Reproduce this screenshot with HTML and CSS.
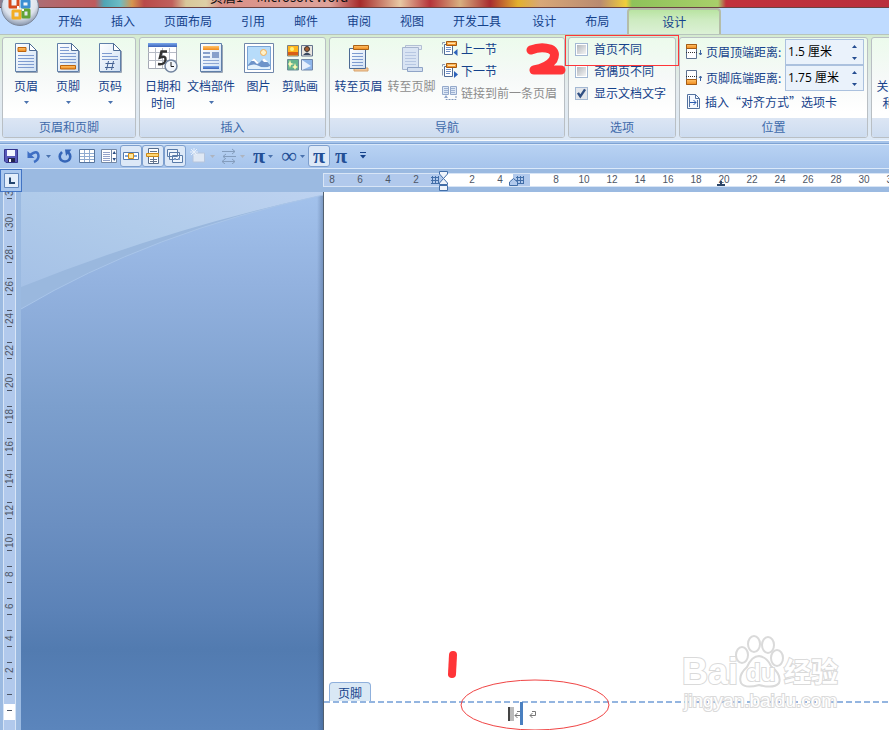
FILE: index.html
```html
<!DOCTYPE html>
<html lang="zh-CN">
<head>
<meta charset="utf-8">
<title>页眉1 - Microsoft Word</title>
<link rel="stylesheet" href="styles.css">
</head>
<body>
<svg class="defs" aria-hidden="true">
  <defs>
    <linearGradient id="paper" x1="0" y1="0" x2="1" y2="1"><stop offset="0" stop-color="#fff"/><stop offset="1" stop-color="#cfe0f4"/></linearGradient>
    <linearGradient id="orange" x1="0" y1="0" x2="0" y2="1"><stop offset="0" stop-color="#ffc36a"/><stop offset="1" stop-color="#f08a1c"/></linearGradient>
    <linearGradient id="blue" x1="0" y1="0" x2="0" y2="1"><stop offset="0" stop-color="#7aa7ea"/><stop offset="1" stop-color="#3a62b8"/></linearGradient>
    <symbol id="sheet" viewBox="0 0 24 30"><path d="M1.500 .5H15.500L22.500 7.500V28.500H1.500Z" fill="url(#paper)" stroke="#5f7fa8"/><path d="M2 29.500H23.500V8" fill="none" stroke="#9aa5b5"/><path d="M15.500 .5V7.500H22.500Z" fill="#fff" stroke="#4c6a94"/></symbol>
    <symbol id="down" viewBox="0 0 5 3"><path d="M0 0H5L2.500 3Z" fill="currentColor"/></symbol>
    <symbol id="up" viewBox="0 0 5 3"><path d="M0 3H5L2.500 0Z" fill="currentColor"/></symbol>
    <symbol id="section" viewBox="0 0 16 16"><path d="M.5 3.500V1.500H3M.5 6V12.500" fill="none" stroke="#8c9bb3"/><path d="M2.500 3.500H10.500V13.500H2.500Z" fill="#fff" stroke="#4e6b96"/><path d="M4 6.500H9M4 8.500H9M4 10.500H8" stroke="#6f8fc5"/><path d="M4.500 .5H14.500V4.500H4.500Z" fill="url(#orange)" stroke="#a55a10"/><path d="M6 2.500H13" stroke="#ffe3b0"/></symbol>
    <symbol id="grid" viewBox="0 0 8 8"><path d="M0 1.500H8M0 4.500H8M0 7.500H8M1.500 0V8M4.500 0V8M7.500 0V8" stroke="#426ea8" fill="none"/></symbol>
    <symbol id="return" viewBox="0 0 8 8"><path d="M3 1.500H6.500V5.500H1M3.500 3L1 5.500L3.500 8" fill="none" stroke="#777"/></symbol>
  </defs>
</svg>

<header class="titlebar">
  <span class="title">页眉1&nbsp; - Microsoft Word</span>
</header>
<button class="office" type="button" aria-label="Office 按钮">
  <svg width="38" height="38" viewBox="0 0 38 38"><defs><radialGradient id="orb" cx=".5" cy=".35" r=".65"><stop offset="0" stop-color="#fff"/><stop offset=".7" stop-color="#dce2ec"/><stop offset="1" stop-color="#8795ac"/></radialGradient></defs>
  <circle cx="19" cy="19" r="18.500" fill="url(#orb)" stroke="#7c8698"/>
  <g fill="none" stroke-width="3" stroke-linejoin="round"><path d="M9 11V19H17V12" stroke="#d64a1c"/><path d="M21 13H28V19H21Z" stroke="#3d8fd2"/><path d="M12 23H19V30H12Z" stroke="#f3ad22"/><path d="M22 22H28V29H22Z" stroke="#62a336"/></g>
  <path d="M16 18H18V21H16ZM21 21H23V23H21Z" fill="#fff"/></svg>
</button>

<nav class="tabs" aria-label="功能区选项卡">
  <button type="button">开始</button><button type="button">插入</button><button type="button">页面布局</button><button type="button">引用</button><button type="button">邮件</button><button type="button">审阅</button><button type="button">视图</button><button type="button">开发工具</button><button type="button" class="context">设计</button><button type="button">布局</button><button type="button" class="active">设计</button>
</nav>

<main class="ribbon">
  <section class="group">
    <div class="tools">
      <button class="big" type="button"><svg width="24" height="30"><use href="#sheet"/><path d="M4 4.500H12V8.500H4Z" fill="url(#orange)" stroke="#bd640e"/><path d="M4 12.500H20M4 15.500H20M4 18.500H20M4 21.500H20M4 24.500H20" stroke="#7e9bd0"/></svg><span>页眉</span><svg class="arrow"><use href="#down"/></svg></button>
      <button class="big" type="button"><svg width="24" height="30"><use href="#sheet"/><path d="M4 4.500H13M4 7.500H13M4 10.500H20M4 13.500H20M4 16.500H20M4 19.500H20" stroke="#7e9bd0"/><path d="M4.500 22.500H19.500V26H4.500Z" fill="url(#orange)" stroke="#bd640e"/></svg><span>页脚</span><svg class="arrow"><use href="#down"/></svg></button>
      <button class="big" type="button"><svg width="24" height="30"><use href="#sheet"/><path d="M4 10.500H14M4 13.500H20M4 16.500H20" stroke="#7e9bd0"/><path d="M10.500 18L8.500 27M15.500 18L13.500 27M7.500 20.500H16.500M7 24.500H16" stroke="#466394" fill="none"/></svg><span>页码</span><svg class="arrow"><use href="#down"/></svg></button>
    </div>
    <h2>页眉和页脚</h2>
  </section>

  <section class="group">
    <div class="tools">
      <button class="big" type="button"><svg width="30" height="30"><path d="M.5 .5H28.500V25.500H.5Z" fill="#fff" stroke="#a4a9b4"/><path d="M0 9.500H28M0 17.500H28M7.500 5V25M14.500 5V25M21.500 5V25" stroke="#b7bcc6"/><path d="M0 0H29V4H0Z" fill="url(#blue)"/><path d="M19 8.500H13.500L12 14.500Q18 12 17.500 17T10 21" fill="none" stroke="#333" stroke-width="2.500"/><circle cx="23" cy="23" r="6" fill="#f3f7fc" stroke="#71839e" stroke-width="1.500"/><path d="M23 19V23.500H26" fill="none" stroke="#222"/></svg><span>日期和<br>时间</span></button>
      <button class="big wide" type="button"><svg width="24" height="30"><path d="M1.500 .5H22.500V28.500H1.500Z" fill="url(#paper)" stroke="#5f7fa8"/><path d="M2 29.500H23.500V2" fill="none" stroke="#9aa5b5"/><path d="M4 3H20V7H4Z" fill="url(#orange)"/><path d="M4 9H11V11H4ZM4 13H11V15H4Z" fill="#88a0cb"/><path d="M13 9H20V15H13Z" fill="#88a0cb"/><path d="M4 17.500H20M4 20.500H20" stroke="#8ca6d3"/><path d="M4 23H20V26H4Z" fill="url(#blue)"/></svg><span>文档部件</span><svg class="arrow"><use href="#down"/></svg></button>
      <button class="big photo" type="button"><svg width="30" height="30"><path d="M.5 .5H29.500V29.500H.5Z" fill="#fff" stroke="#7087aa"/><path d="M3.500 3.500H26.500V26.500H3.500Z" fill="#b7dcfa" stroke="#7ba5d4"/><circle cx="19.500" cy="9.500" r="3" fill="#fff1c8" stroke="#f2ad55"/><path d="M4 22L10 15L15 20L20 15L26 22V24H4Z" fill="#6e94c9"/><path d="M7 18L10 15L15 20L13 21L10 18ZM18 17L20 15L24 19L20 19Z" fill="#fff"/><path d="M4 23Q10 20 15 23T26 23V26H4Z" fill="#e4f2fc"/></svg><span>图片</span></button>
      <button class="big" type="button"><svg width="30" height="30"><path d="M2.500 2.500H13.500V13H2.500Z" fill="#ffb51d" stroke="#7b7f80"/><path d="M3 9H13V12H3Z" fill="#d95d16"/><circle cx="7" cy="6" r="2" fill="#fff27c"/><path d="M16.500 2.500H27.500V13H16.500Z" fill="#e8e5df" stroke="#64748d"/><circle cx="22" cy="6" r="2.500" fill="#a65d2f" stroke="#333"/><path d="M18 12Q22 7 26 12Z" fill="#39485f"/><path d="M2.500 16.500H13.500V27H2.500Z" fill="#65b58d" stroke="#6b8b97"/><path d="M5 17L6 20L9 21L6 22L5 25L4 22L3 21L4 20ZM10 20L11 23L13 24L11 25L10 27L9 25L7 24L9 23Z" fill="#fff8b2"/><path d="M16.500 16.500H27.500V27H16.500Z" fill="#8eb6ea" stroke="#7186a8"/><path d="M17 17L26 23L17 27Z" fill="#e6f0fd"/></svg><span>剪贴画</span></button>
    </div>
    <h2>插入</h2>
  </section>

  <section class="group">
    <div class="tools">
      <button class="big goto" type="button"><svg width="24" height="30"><path d="M7 25H21V28H7Z" fill="#f5c99a" stroke="#d7a26c"/><path d="M2.500 5.500H18.500V25.500H2.500Z" fill="url(#paper)" stroke="#4d6a94"/><path d="M5 10.500H16M5 13.500H16M5 16.500H16M5 19.500H16M5 22.500H16" stroke="#7e9bd0"/><path d="M6.500 2.500H21.500V6.500H6.500Z" fill="url(#orange)" stroke="#a96118"/></svg><span>转至页眉</span></button>
      <button class="big goto" type="button" disabled><svg width="24" height="30"><path d="M5.500 2.500H21.500V6.500H5.500Z" fill="#e4ebf5" stroke="#b2bfd3"/><path d="M2.500 4.500H18.500V26.500H2.500Z" fill="#d9e4f3" stroke="#a6b5ce"/><path d="M5 9.500H16M5 12.500H16M5 15.500H16M5 18.500H16M5 21.500H16" stroke="#b7c7e2"/><path d="M7.500 24.500H22.500V28.500H7.500Z" fill="#d3dff0" stroke="#8fa4c7"/></svg><span>转至页脚</span></button>
      <div class="stack">
        <button class="small" type="button"><svg width="16" height="16"><use href="#section"/><path d="M15.500 8V15L11.500 11.500Z" fill="#2d62ba"/></svg>上一节</button>
        <button class="small" type="button"><svg width="16" height="16"><use href="#section"/><path d="M12 8V15L16 11.500Z" fill="#2d62ba"/></svg>下一节</button>
        <button class="small" type="button" disabled><svg width="16" height="16"><path d="M.5 1.500H6.500V9.500H.5ZM8.500 1.500H14.500V9.500H8.500Z" fill="#dce7f5" stroke="#94a9ca"/><path d="M2 3.500H6M2 5.500H6M9 3.500H13M9 5.500H13M2 7.500H6M9 7.500H13" stroke="#9eb2d2"/><path d="M4 11V14.500H14V11" fill="none" stroke="#7f96bb" stroke-dasharray="2 1"/><path d="M2 13L4 10L6 13Z" fill="#92a8ce"/></svg>链接到前一条页眉</button>
      </div>
    </div>
    <h2>导航</h2>
    <svg class="mark-two" width="40" height="34" viewBox="0 0 40 34" aria-hidden="true"><path d="M5 7Q15 3 24 6Q31 9 27 17Q22 24 8 27L35 27" fill="none" stroke="#ff3538" stroke-width="9" stroke-linecap="round" stroke-linejoin="round"/></svg>
  </section>

  <section class="group">
    <div class="tools options">
      <label><input type="checkbox">首页不同</label>
      <label><input type="checkbox">奇偶页不同</label>
      <label><input type="checkbox" checked>显示文档文字</label>
    </div>
    <h2>选项</h2>
    <div class="mark-box"></div>
  </section>

  <section class="group">
    <div class="tools position">
      <div class="measure">
        <svg width="16" height="16"><path d="M.5 .5H10.500V14.500H.5Z" fill="#fff" stroke="#5d7190"/><path d="M.5 .5H10.500V4.500H.5Z" fill="url(#orange)" stroke="#a65c13"/><path d="M0 8.500H11" stroke="#333" stroke-dasharray="1 1"/><path d="M14.500 6V11M13 9L14.500 11L16 9" stroke="#3e64a0" fill="none"/></svg>
        <label for="top">页眉顶端距离:</label>
        <span class="spin"><input id="top" type="text" value="1.5 厘米"><span class="steps"><button type="button" aria-label="增加页眉距离"><svg><use href="#up"/></svg></button><button type="button" aria-label="减少页眉距离"><svg><use href="#down"/></svg></button></span></span>
      </div>
      <div class="measure">
        <svg width="16" height="16"><path d="M.5 .5H10.500V14.500H.5Z" fill="#fff" stroke="#5d7190"/><path d="M.5 9.500H10.500V14.500H.5Z" fill="url(#orange)" stroke="#a65c13"/><path d="M0 6.500H11" stroke="#333" stroke-dasharray="1 1"/><path d="M14.500 11V6M13 8L14.500 6L16 8" stroke="#3e64a0" fill="none"/></svg>
        <label for="bottom">页脚底端距离:</label>
        <span class="spin"><input id="bottom" type="text" value="1.75 厘米"><span class="steps"><button type="button" aria-label="增加页脚距离"><svg><use href="#up"/></svg></button><button type="button" aria-label="减少页脚距离"><svg><use href="#down"/></svg></button></span></span>
      </div>
      <button class="small align" type="button"><svg width="16" height="16"><path d="M1.500 .5H9.500L13.500 4.500V14.500H1.500Z" fill="#f5f9ff" stroke="#5372a0"/><path d="M9.500 .5V4.500H13.500M3.500 2V13M11.500 6V13" fill="none" stroke="#5372a0"/><path d="M4 8.500H10M7.500 6L10 8.500L7.500 11" fill="none" stroke="#2859ae"/></svg>插入“对齐方式”选项卡</button>
    </div>
    <h2>位置</h2>
  </section>

  <section class="group">
    <div class="tools">
      <button class="big goto" type="button"><svg width="20" height="30"><path d="M4 8L16 22M16 8L4 22" stroke="#d33a2c" stroke-width="4"/></svg><span>关闭页眉<br>和页脚</span></button>
    </div>
    <h2>关闭</h2>
  </section>
</main>

<div class="quick" role="toolbar" aria-label="快速访问工具栏">
  <button type="button" aria-label="保存"><svg width="16" height="16"><path d="M1.500 1.500H14.500V14.500H3L1.500 13Z" fill="#5759b8" stroke="#35358c"/><path d="M4 2H12V8H4Z" fill="#f4f7ff"/><path d="M5 10H12V14H5Z" fill="#25264d"/><path d="M6 11H8V14H6Z" fill="#fff"/></svg></button>
  <button class="split" type="button" aria-label="撤消"><svg width="16" height="16"><path d="M4 7Q12 1 12.500 8Q12.500 12 8 14" fill="none" stroke="#3f6fc4" stroke-width="2.500"/><path d="M1.500 3V10H8.500Z" fill="#3f6fc4"/></svg><svg class="arrow"><use href="#down"/></svg></button>
  <button type="button" aria-label="重复"><svg width="16" height="16"><path d="M5 4Q1 8 4 12Q8 15 12 12Q15 8 11 4" fill="none" stroke="#3565b7" stroke-width="2.500"/><path d="M8 1.500H14.500L9 8Z" fill="#3565b7"/></svg></button>
  <button type="button" aria-label="表格"><svg width="16" height="16"><path d="M.5 1.500H15.500V14.500H.5Z" fill="#fff" stroke="#56749d"/><path d="M1 5.500H15M1 8.500H15M1 11.500H15M5.500 2V14M10.500 2V14" stroke="#8faad0"/></svg></button>
  <button type="button" aria-label="列表框"><svg width="16" height="16"><path d="M.5 1.500H15.500V14.500H.5Z" fill="#fff" stroke="#7488a5"/><path d="M10.500 2V14" stroke="#7488a5"/><path d="M2 4.500H9M2 6.500H9M2 8.500H9M2 10.500H9M2 12.500H9" stroke="#93a2c9"/><path d="M11.500 6H15L13.200 3ZM11.500 10H15L13.200 13Z" fill="#294d85"/></svg></button>
  <button class="on" type="button" aria-label="居中控件"><svg width="16" height="16"><path d="M.5 4.500H15.500V11.500H.5Z" fill="#fff" stroke="#577cac"/><path d="M2 7H5V9H2ZM11 7H14V9H11Z" fill="#7da5d8"/><path d="M5.500 5.500H10.500V10.500H5.500Z" fill="#ffe79a" stroke="#d18c17"/></svg></button>
  <button class="on" type="button" aria-label="版式"><svg width="16" height="16"><path d="M3.500 .5H13.500V15.500H3.500Z" fill="#fff" stroke="#566d8d"/><path d="M5 3.500H12M5 11.500H12M5 13.500H12M8.500 9V15" stroke="#65758e"/><path d="M1.500 5.500H13.500V8.500H1.500Z" fill="#ffd774" stroke="#ce8917"/></svg></button>
  <button class="on" type="button" aria-label="窗口"><svg width="16" height="16"><path d="M.5 1.500H10.500V8.500H.5ZM2.500 4.500H12.500V11.500H2.500ZM5.500 7.500H15.500V14.500H5.500Z" fill="#eef5fd" stroke="#587aa8"/><path d="M7 10H9V12H7ZM11 10H13V12H11Z" fill="#7b9bc8"/></svg></button>
  <button class="split" type="button" aria-label="新建" disabled><svg width="16" height="16"><path d="M5 5H14.500V14H3V8Z" fill="#dfe8f4" stroke="#b6c5dc"/><path d="M4 0V8M0 4H8M1 1L7 7M7 1L1 7" stroke="#e8f0fa"/></svg><svg class="arrow"><use href="#down"/></svg></button>
  <button class="split tight" type="button" aria-label="箭头" disabled><svg width="16" height="16"><path d="M1 3.500H14M11 1L14 3.500L11 6M15 8.500H2M5 6L2 8.500L5 11M1 13.500H14M11 11L14 13.500L11 16M4 11L1 13.500L4 16" fill="none" stroke="#849dbd"/></svg><svg class="arrow"><use href="#down"/></svg></button>
  <button class="split tight" type="button"><span class="math">π</span><svg class="arrow"><use href="#down"/></svg></button>
  <button class="split tight" type="button"><span class="math thin">∞</span><svg class="arrow"><use href="#down"/></svg></button>
  <button class="on" type="button"><span class="math">π</span></button>
  <button type="button"><span class="math">π</span></button>
  <button type="button" aria-label="自定义快速访问工具栏"><svg width="8" height="8"><path d="M1 .5H7" stroke="#15428b"/><path d="M1 3H7L4 6.500Z" fill="#15428b"/></svg></button>
</div>

<div class="rulerbar">
  <button class="corner" type="button" aria-label="左对齐制表符"><svg width="15" height="15"><path d="M.5 .5H14.500V14.500H.5Z" fill="#e3eefb" stroke="#6288bd"/><path d="M6 4.500V10H11" fill="none" stroke="#23456f" stroke-width="2"/></svg></button>
  <div class="hruler">
    <div class="hnumbers"><i>8</i><i>6</i><i>4</i><i>2</i><i></i><i>2</i><i>4</i><i></i><i>8</i><i>10</i><i>12</i><i>14</i><i>16</i><i>18</i><i>20</i><i>22</i><i>24</i><i>26</i><i>28</i><i>30</i><i>32</i></div>
    <svg class="markers" width="410" height="22" viewBox="0 0 410 22"><use href="#grid" x="108" y="6" width="8" height="8"/><use href="#grid" x="193" y="6" width="8" height="8"/><g fill="#eff4fb" stroke="#426ea8"><path d="M116.500 1.500H124.500V4L120.500 8.500L116.500 4ZM116.500 14.500V13L120.500 8.500L124.500 13V14.500ZM116.500 15.500H124.500V20.500H116.500Z"/><path d="M186.500 15.500V12L190.500 8.500L194.500 12V15.500Z" fill="#b1c9ec"/></g><path d="M398 11V14M394 15H402" stroke="#2c4668" stroke-width="2"/></svg>
  </div>
</div>

<div class="workspace">
  <div class="vruler">
    <div class="vnumbers"><i>32</i><i>30</i><i>28</i><i>26</i><i>24</i><i>22</i><i>20</i><i>18</i><i>16</i><i>14</i><i>12</i><i>10</i><i>8</i><i>6</i><i>4</i><i>2</i></div>
    <div class="vgap"></div><div class="vwhite"></div>
  </div>
  <div class="desk">
    <svg viewBox="0 0 302 120" preserveAspectRatio="none"><defs><linearGradient id="sky" x1="0" y1="1" x2="1" y2="0"><stop offset="0" stop-color="#a5c1e6"/><stop offset=".5" stop-color="#b0cbea"/><stop offset="1" stop-color="#bdd2f0"/></linearGradient></defs><path d="M0 0H302V3Q130 40 0 117Z" fill="#9ab8de"/><path d="M0 0H302V3Q150 35 0 95Z" fill="url(#sky)"/><path d="M302 3Q130 40 0 117" fill="none" stroke="#a9c5e9"/></svg>
  </div>
  <article class="page">
    <svg class="mark-one" width="10" height="30" aria-hidden="true"><path d="M5 5L4 24" stroke="#ff3538" stroke-width="8" stroke-linecap="round"/></svg>
    <svg class="watermark" width="170" height="86" viewBox="0 0 170 86" aria-label="Baidu 经验"><g fill="#fff" stroke="#dadada" stroke-width="2"><text class="wm-url" x="3" y="74">jingyan.baidu.com</text><text class="wm-brand" x="1" y="51">Bai</text><g><ellipse cx="61" cy="22" rx="6" ry="8"/><ellipse cx="73" cy="11" rx="6" ry="8"/><ellipse cx="87" cy="12" rx="6" ry="8"/><ellipse cx="96" cy="25" rx="6" ry="8"/><path d="M78 23Q86 24 90 33Q101 42 98 50Q93 56 78 52Q64 56 60 50Q57 42 66 34Q71 23 78 23Z"/></g><text class="wm-du" x="65" y="48">du</text><text class="wm-cjk" x="103" y="49">经验</text></g></svg>
    <span class="footer-tab">页脚</span>
    <div class="footer">
      <div class="caret-line"><span class="field"></span><svg width="8" height="8"><use href="#return"/></svg><span class="bar"></span><svg width="8" height="8"><use href="#return"/></svg></div>
      <svg class="oval" width="150" height="52" aria-hidden="true"><ellipse cx="75" cy="26" rx="74" ry="25" fill="none" stroke="#f04444"/></svg>
    </div>
  </article>
</div>
</body>
</html>
```

FILE: styles.css
```css
* { box-sizing: border-box; }

body {
  margin: 0;
  height: 100vh;
  display: flex;
  flex-direction: column;
  overflow: hidden;
  position: relative;
  background: #bfdbff;
  color: #15428b;
  font: 12px/16px "Noto Sans CJK SC", "Open Sans", sans-serif;
}

button {
  margin: 0;
  padding: 0;
  border: 0;
  background: none;
  color: inherit;
  font: inherit;
  white-space: nowrap;
}

button:disabled { color: #8d8d8d; }
svg { display: block; flex: none; }
.defs { position: absolute; width: 0; height: 0; }
.arrow { width: 5px; height: 3px; color: #4a72ae; }

/* Title strip */
.titlebar {
  flex: none;
  height: 8px;
  padding-left: 210px;
  display: flex;
  align-items: flex-end;
  overflow: hidden;
  border-bottom: 1px solid #6a4242;
  background: linear-gradient(90deg, #8f7f91 0, #b06a70 45px, #bf5a5c 95px, #4fa5b5 104px, #6cbcc4 120px, #d6964e 132px, #b94a4a 144px, #c0605c 172px, #d8c89a 186px, #ddcfa6 206px, #d98f86 220px, #dea39a 330px, #a62a2a 360px, #e8c9a4 400px, #b5333a 430px, #d8b080 460px, #a82c30 490px, #e3b12c 518px, #d8a878 540px, #b98a70 600px, #f0cf3a 626px, #8fc25a 632px, #a8cf6a 718px, #c2323c 726px, #b92f3c 100%);
}
.title { color: #111; font-size: 13px; line-height: 18px; margin-bottom: 1px; white-space: nowrap; }
.office { position: absolute; left: 1px; top: -12px; z-index: 2; }

/* Tabs */
.tabs {
  flex: none;
  height: 26px;
  padding-left: 58px;
  display: flex;
  gap: 29px;
  background: #bfdbff;
}
.tabs .context { margin-left: 2px; }
.tabs .active {
  margin-left: -11px;
  padding: 0 33px;
  border: 2px solid #b4bda8;
  border-bottom: 0;
  border-radius: 4px 4px 0 0;
  background: linear-gradient(#b9e4a2, #cdebc0 40%, #dcf1d6);
}

/* Ribbon */
.ribbon {
  flex: none;
  height: 107px;
  padding: 2px 2px 2px;
  display: flex;
  gap: 3px;
  border-top: 1px solid #b7c4bd;
  border-bottom: 1px solid #f7fafd;
  background: linear-gradient(#d5ebd0, #e4ebee 50%, #dce8f6);
}
.group {
  flex: none;
  position: relative;
  display: flex;
  flex-direction: column;
  border: 1px solid #b9bfc4;
  border-radius: 3px;
  background: linear-gradient(#ecfbec, #f6f9f8 40%, #fff 75%);
}
.group h2 {
  margin: 0;
  height: 19px;
  border-radius: 0 0 2px 2px;
  background: linear-gradient(#dce6f4, #cddcf0);
  color: #3e6aaa;
  font-size: 12px;
  font-weight: 400;
  line-height: 18px;
  text-align: center;
}
.tools { flex: 1; display: flex; padding: 0 4px 0 2px; }
.big {
  width: 42px;
  padding-top: 5px;
  display: flex;
  flex-direction: column;
  align-items: center;
  gap: 4px;
}
.big span { line-height: 17px; }
.big .arrow { margin-top: 3px; }
.big.wide { width: 54px; }
.big.photo { width: 41px; }
.big.goto { width: 53px; }
.stack { display: flex; flex-direction: column; padding-left: 4px; }
.small { height: 22px; display: flex; align-items: center; gap: 3px; padding-right: 3px; }
.options { flex-direction: column; padding: 0 9px 0 6px; }
.options label { height: 22px; display: flex; align-items: center; gap: 6px; white-space: nowrap; }
.options input {
  appearance: none;
  width: 13px;
  height: 13px;
  margin: 0;
  border: 1px solid #a3b8d3;
  background: linear-gradient(135deg, #b3b7bd, #f4f4f4) content-box, #fff;
  padding: 1px;
}
.options input:checked {
  background: url("data:image/svg+xml,%3Csvg xmlns='http://www.w3.org/2000/svg' viewBox='0 0 11 11'%3E%3Cpath d='M2.500 5L4.500 8L8.500 2' fill='none' stroke='%23304f83' stroke-width='2'/%3E%3C/svg%3E") border-box, #e3e6eb;
}
.position { flex-direction: column; padding: 1px 3px 0 6px; }
.measure { height: 26px; display: flex; align-items: center; }
.measure label { width: 79px; margin-left: 4px; white-space: nowrap; }
.spin { display: flex; width: 79px; height: 26px; border: 1px solid #abc1de; background: #eaf2fb; }
.spin input {
  width: 60px;
  min-width: 0;
  padding: 0 0 1px 2px;
  border: 0;
  background: transparent;
  color: #000;
  font: 12px/16px "Open Sans", "Noto Sans CJK SC", sans-serif;
}
.steps { flex: 1; display: flex; flex-direction: column; color: #234c91; }
.steps button { flex: 1; display: flex; align-items: center; justify-content: center; }
.steps svg { width: 5px; height: 3px; }
.mark-two { position: absolute; right: -2px; top: 5px; }
.mark-box { position: absolute; left: -4px; right: -4px; top: -3px; height: 31px; border: 1px solid #ff3538; z-index: 1; }

/* Quick access toolbar */
.quick {
  flex: none;
  height: 28px;
  padding-top: 4px;
  display: flex;
  border-bottom: 1px solid #dbe9fa;
  background: linear-gradient(#a6c4ea 0, #a6c4ea 2px, #7fa3d3 2px, #7fa3d3 3px, #d9e8fa 3px, #d9e8fa 4px, #b8d2f3 4px, #a6c4ec 100%);
}
.quick button { width: 22px; height: 22px; display: flex; align-items: center; justify-content: center; border-radius: 3px; }
.quick .split { width: 32px; gap: 4px; }
.quick .tight { width: 30px; gap: 3px; }
.quick .on { border: 1px solid #7d9fce; background: #dce8f7; }
.quick button:disabled .arrow { color: #aeb4bf; }
.math { color: #234f96; font: bold 22px/20px "Liberation Serif", serif; }
.math.thin { font-weight: 400; }

/* Rulers */
.rulerbar { flex: none; height: 23px; display: flex; background: #9bbae1; }
.corner { width: 22px; height: 23px; display: flex; align-items: center; justify-content: center; border: 1px solid #4274c4; background: #a9c7ee; }
.hruler {
  flex: 1;
  min-width: 0;
  position: relative;
  height: 14px;
  margin: 4px 0 0 301px;
  border: solid #d8e5f6;
  border-width: 1px 0 1px 1px;
  background: linear-gradient(90deg, #b1c9ec 120px, #fff 120px, #fff 189px, #b1c9ec 189px, #b1c9ec 206px, #fff 206px);
}
.hnumbers { display: flex; overflow: hidden; height: 12px; }
.hnumbers i { flex: 0 0 28px; text-align: center; font: 10px/12px "Liberation Sans", sans-serif; color: #4d5666; }
.hnumbers i:first-child { flex-basis: 22px; padding-right: 6px; }
.markers { position: absolute; left: -1px; top: -4px; }
.workspace { flex: 1; min-height: 0; display: flex; background: #9bbae1; }
.vruler {
  flex: none;
  width: 13px;
  margin: 0 5px 0 3px;
  overflow: hidden;
  border: solid #d8e5f6;
  border-width: 0 1px;
  background: #b1c9ec;
}
.vnumbers { margin-top: -18px; }
.vnumbers i {
  display: flex;
  align-items: center;
  justify-content: center;
  width: 11px;
  height: 32px;
  writing-mode: vertical-rl;
  transform: rotate(180deg);
  font: 10px/11px "Liberation Sans", sans-serif;
  color: #4d5666;
  background: linear-gradient(#4d5666, #4d5666) 3px 7px / 5px 1px no-repeat, linear-gradient(#4d5666, #4d5666) 3px 23px / 5px 1px no-repeat;
}
.vgap { height: 18px; background: linear-gradient(#4d5666, #4d5666) 3px 8px / 5px 1px no-repeat; }
.vwhite { height: 16px; background: linear-gradient(#4d5666, #4d5666) 3px 6px / 5px 1px no-repeat, #fff; }

/* Document */
.desk {
  flex: none;
  width: 302px;
  background: linear-gradient(90deg, transparent 296px, rgba(40, 65, 105, .3)), linear-gradient(#a3c2ec, #93b2df 17%, #7c9fcd 40%, #6b8fc1 62%, #5b82b7 78%, #527bb0 85%, #5b85bc);
}
.desk svg { width: 100%; height: 120px; }
.page {
  flex: 1;
  min-width: 0;
  position: relative;
  display: flex;
  flex-direction: column;
  justify-content: flex-end;
  align-items: flex-start;
  border-left: 1px solid #52606f;
  background: #fff;
}
.footer-tab {
  margin-left: 5px;
  width: 42px;
  height: 19px;
  border: 1px solid #8fb0dc;
  border-bottom: 0;
  border-radius: 4px 4px 0 0;
  background: #d9e8f5;
  line-height: 20px;
  text-align: center;
}
.footer {
  width: 100%;
  height: 29px;
  position: relative;
  background: repeating-linear-gradient(90deg, #94b5e0 0, #94b5e0 6px, transparent 6px, transparent 9px) 0 0 / 100% 2px no-repeat;
}
.caret-line { display: flex; align-items: center; padding: 1px 0 0 184px; }
.field { width: 6px; height: 14px; background: linear-gradient(90deg, #444 2px, #bbb 2px); }
.bar { width: 3px; height: 23px; margin: 0 6px 0 -2px; background: #4a80c0; }
.oval { position: absolute; left: 136px; bottom: -1px; }
.mark-one { position: absolute; left: 124px; bottom: 50px; }
.watermark { position: absolute; left: 357px; bottom: 11px; z-index: 1; }
.watermark text { font-family: "Liberation Sans", sans-serif; paint-order: stroke; }
.wm-brand { font-size: 36px; font-weight: 700; }
.wm-du { font-size: 24px; font-weight: 700; }
.watermark .wm-cjk { font-family: "Noto Sans CJK SC", sans-serif; font-size: 27px; font-weight: 700; }
.wm-url { font-size: 19px; }
```
